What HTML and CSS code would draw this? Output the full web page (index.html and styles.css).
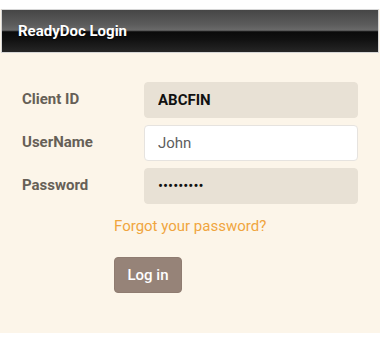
FILE: index.html
```html
<!DOCTYPE html>
<html lang="en">
<head>
    <meta charset="UTF-8">
    <meta name="viewport" content="width=device-width, initial-scale=1.0">
    <title>ReadyDoc Login</title>
    <link rel="stylesheet" href="styles.css">
</head>
<body>
    <div class="login-panel">
        <div class="login-header">ReadyDoc Login</div>
        <form class="login-form" id="loginForm">
            <div class="form-row">
                <label for="clientId">Client ID</label>
                <input type="text" id="clientId" class="locked" value="ABCFIN" readonly>
            </div>
            <div class="form-row">
                <label for="userName">UserName</label>
                <input type="text" id="userName" value="John">
            </div>
            <div class="form-row">
                <label for="password">Password</label>
                <input type="password" id="password" class="filled" value="secret123">
            </div>
            <div class="actions">
                <a href="#" class="forgot">Forgot your password?</a>
                <button type="submit">Log in</button>
            </div>
        </form>
    </div>
</body>
</html>
```

FILE: styles.css
```css
body {
    margin: 0;
    background-color: #fff;
    font-family: Roboto, 'Liberation Sans', Arial, sans-serif;
}
.login-panel {
    width: 380px;
    margin-top: 9px;
    padding-bottom: 40px;
    background-color: #fcf5e9;
}
.login-header {
    margin: 0 1px;
    height: 42px;
    line-height: 42px;
    padding-left: 16px;
    border: 1px solid #d6d6d6;
    background: linear-gradient(to bottom, #464646 0%, #5c5c5c 35%, #6a6a6a 48%, #0a0a0a 52%, #111 70%, #262626 100%);
    color: #fff;
    font-size: 15px;
    font-weight: bold;
    text-shadow: 0 1px 1px rgba(0, 0, 0, 0.6);
}
.login-form {
    padding: 29px 22px 0 22px;
}
.form-row {
    display: flex;
    align-items: center;
    margin-bottom: 7px;
}
.form-row label {
    width: 122px;
    color: #665f57;
    font-size: 15px;
    font-weight: bold;
    padding-bottom: 3px;
}
.form-row input {
    box-sizing: border-box;
    width: 214px;
    height: 36px;
    padding: 0 13px;
    border: 1px solid #e6e3df;
    border-radius: 4px;
    background-color: #fff;
    color: #5d5d5d;
    font-family: inherit;
    font-size: 15px;
    outline: none;
}
.form-row input.locked {
    background-color: #e8e1d5;
    border-color: #e8e1d5;
    color: #111;
    font-weight: bold;
}
.form-row input.filled {
    background-color: #e8e1d5;
    border-color: #e8e1d5;
    color: #111;
}
.actions {
    display: flex;
    flex-direction: column;
    align-items: flex-start;
    padding-left: 92px;
    padding-top: 6px;
}
.forgot {
    color: #f0a53e;
    font-size: 15px;
    line-height: 18px;
    text-decoration: none;
}
button {
    margin-top: 22px;
    width: 68px;
    height: 36px;
    border: 1px solid #8f7c71;
    border-radius: 4px;
    background-color: #968378;
    color: #fff;
    font-family: inherit;
    font-size: 15px;
    font-weight: 500;
    cursor: pointer;
}
button:hover {
    background-color: #85736a;
}
```
